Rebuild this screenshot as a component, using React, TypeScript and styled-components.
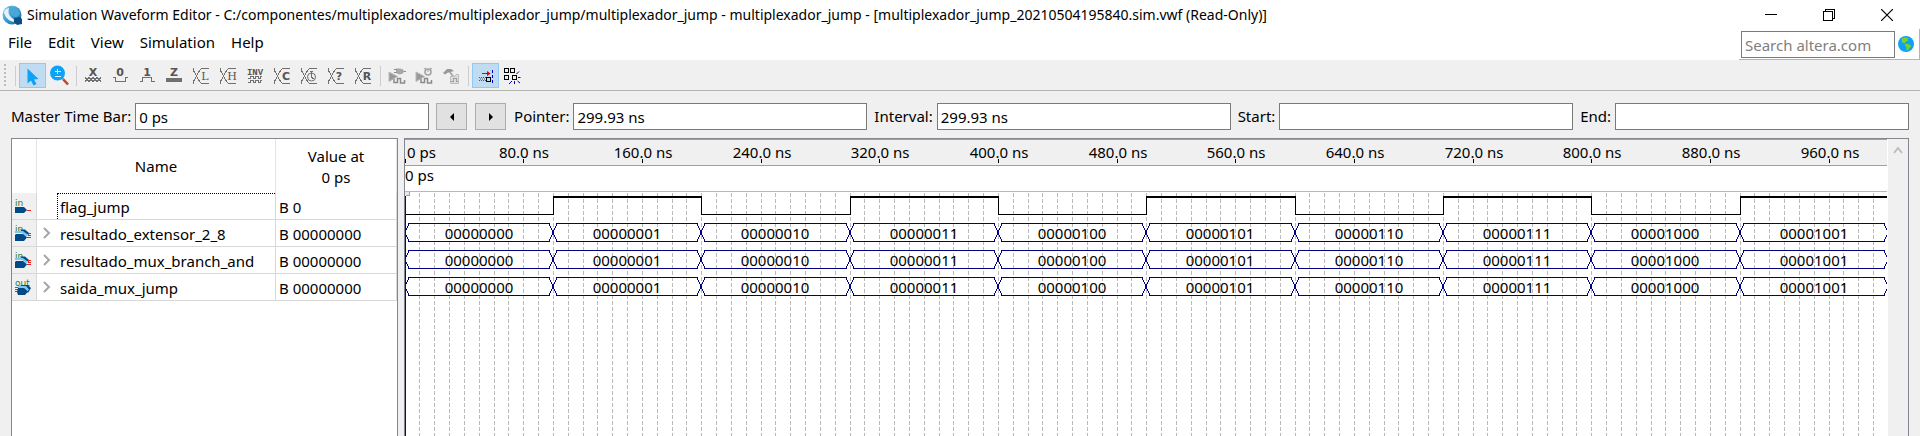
import React, { useLayoutEffect, useRef, useState } from "react";
import styled, { createGlobalStyle } from "styled-components";

const GlobalStyle = createGlobalStyle`
  *, *::before, *::after { box-sizing: border-box; }
  body { margin: 0; background: #f0f0f0; }
  body, button, input { font-family: "Noto Sans", "Open Sans", sans-serif; font-size: 15px; color: #000; }
`;

const Window = styled.div`
  display: flex;
  flex-direction: column;
  min-height: 100vh;
  line-height: 21px;
  overflow: hidden;
`;

const TitleBar = styled.header`
  display: flex;
  align-items: center;
  height: 29px;
  padding: 0 4px 0 2px;
  background: #fff;
`;

const Title = styled.h1`
  flex: 1;
  min-width: 0;
  margin: 0 0 0 5px;
  font-size: 14px;
  font-weight: 400;
  white-space: nowrap;
  overflow: hidden;
  text-overflow: ellipsis;
`;

const WindowButton = styled.button`
  display: flex;
  align-items: center;
  justify-content: center;
  width: 58px;
  height: 28px;
  padding: 0;
  border: 0;
  background: transparent;
`;

const MenuRow = styled.div`
  display: flex;
  justify-content: space-between;
  height: 33px;
  background: #fff;
  border-bottom: 2px solid #f0f0f0;
`;

const MenuBar = styled.nav`
  display: flex;
  align-items: flex-start;
  padding-top: 3px;
`;

const MenuItem = styled.button`
  padding: 0 8px;
  border: 0;
  background: transparent;
  line-height: 21px;
`;

const SearchBox = styled.form`
  display: flex;
  align-items: center;
  gap: 3px;
  height: 31px;
  padding: 0 5px 0 2px;
  border-right: 1px solid #b4b4b4;
  border-bottom: 1px solid #b4b4b4;
`;

const Field = styled.input`
  height: 27px;
  min-width: 0;
  padding: 1px 3px 0;
  border: 1px solid #7a7a7a;
  border-radius: 0;
  background: #fff;
  outline: none;
  &::placeholder { color: #808080; opacity: 1; }
`;

const SearchField = styled(Field)`
  width: 154px;
`;

const IconButton = styled.button`
  display: flex;
  padding: 0;
  border: 0;
  background: transparent;
`;

const ToolBar = styled.div`
  display: flex;
  align-items: center;
  height: 29px;
  padding: 0 4px 1px;
  border-bottom: 1px solid #b4b4b4;
`;

const Grip = styled.span`
  width: 2px;
  height: 23px;
  margin-right: 9px;
  background: repeating-linear-gradient(#bdbdbd 0 2px, transparent 2px 4px);
`;

const Separator = styled.span`
  width: 1px;
  height: 20px;
  margin-right: 3px;
  background: #cdcdcd;
  button + & { margin-left: 3px; }
`;

const Tool = styled.button<{ $active?: boolean }>`
  display: flex;
  align-items: center;
  justify-content: center;
  width: 27px;
  height: 25px;
  padding: 0;
  border: 1px solid ${(p) => (p.$active ? "#90c8f6" : "transparent")};
  background: ${(p) => (p.$active ? "#c0dcf3" : "transparent")};
`;

const ToolSvg = styled.svg`
  flex: none;
  width: 27px;
  height: 25px;
  overflow: visible;
`;

const TimeRow = styled.div`
  display: flex;
  align-items: flex-start;
  height: 47px;
  padding: 12px 11px 0;
`;

const FieldLabel = styled.label`
  display: flex;
  flex: 1 1 auto;
  align-items: center;
  gap: 4px;
  margin-right: 7px;
  line-height: 23px;
  white-space: nowrap;
  &:last-child { margin-right: 0; }
  ${Field} { flex: 1 1 0; width: 0; }
`;

const StepButton = styled.button`
  display: flex;
  align-items: center;
  justify-content: center;
  width: 31px;
  height: 27px;
  margin-right: 8px;
  padding: 0;
  border: 1px solid #adadad;
  background: #e1e1e1;
`;

const Panels = styled.main`
  flex: 1;
  display: grid;
  grid-template-columns: 387px 1fr;
  gap: 6px;
  padding: 0 11px;
`;

const Panel = styled.section`
  display: flex;
  min-width: 0;
  border: 1px solid #828790;
  border-bottom: 0;
  background: #fff;
`;

const SignalTable = styled.table`
  align-self: flex-start;
  width: 100%;
  table-layout: fixed;
  border-collapse: separate;
  border-spacing: 0;
`;

const HeadCell = styled.th<{ $width?: number }>`
  width: ${(p) => (p.$width ? `${p.$width}px` : "auto")};
  height: 54px;
  padding: 1px 0 0;
  border-right: 1px solid #e5e5e5;
  font-weight: 400;
`;

const Cell = styled.td<{ $kind?: "icon" | "name" }>`
  height: 27px;
  padding: ${(p) => (p.$kind ? "0" : "3px 0 0 3px")};
  border-right: 1px solid #d8d8d8;
  border-bottom: 1px solid #d8d8d8;
  background: ${(p) => (p.$kind === "icon" ? "#f0f0f0" : "#fff")};
`;

const NameBox = styled.div`
  display: grid;
  grid-template-columns: 20px 1fr;
  height: 26px;
`;

const Expander = styled.button`
  display: flex;
  align-items: center;
  justify-content: center;
  padding: 0;
  border: 0;
  background: transparent;
`;

const SignalName = styled.span<{ $focused: boolean }>`
  grid-column: 2;
  padding: ${(p) => (p.$focused ? "3px 0 0 2px" : "4px 0 0 3px")};
  border-style: dotted;
  border-color: #000;
  border-width: ${(p) => (p.$focused ? "1px 0 0 1px" : "0")};
`;

const WaveColumn = styled.div`
  display: flex;
  flex: 1;
  flex-direction: column;
  min-width: 0;
`;

const Ruler = styled.svg`
  display: block;
  width: 100%;
  height: 27px;
  border-top: 1px solid #a0a0a0;
  border-bottom: 1px solid #a0a0a0;
  background: #f0f0f0;
`;

const TimeBarStrip = styled.div`
  height: 26px;
  line-height: 19px;
  border-bottom: 1px solid #b8b8b8;
`;

const Plot = styled.svg`
  display: block;
  flex: 1;
  width: 100%;
  min-height: 120px;
  overflow: hidden;
`;

const ScrollBar = styled.div`
  width: 21px;
  padding-top: 5px;
  border-left: 1px solid #fff;
  background: #f0f0f0;
  ${IconButton} { margin: 0 auto; }
`;

/* ---------- toolbar drawings ---------- */

const GREY = "#707070";

type GlyphProps = { x?: number; y?: number; size?: number; serif?: boolean; children: string };
const Glyph = ({ x = 13, y = 13, size = 11, serif, children }: GlyphProps) => (
  <text
    x={x}
    y={y}
    fill="#555"
    fontFamily={serif ? "'DejaVu Serif', serif" : "'DejaVu Sans', sans-serif"}
    fontWeight={serif ? 400 : 700}
    fontSize={size}
    textAnchor="middle"
  >
    {children}
  </text>
);

const Line = ({ d, color = GREY, width = 1 }: { d: string; color?: string; width?: number }) => (
  <path d={d} fill="none" stroke={color} strokeWidth={width} shapeRendering="crispEdges" />
);

const BusCross = () => (
  <Line d="M5.5 5V7.500L11.500 18.500L13.500 20.500H21M5.500 21V18.500L11.500 7.500L13.500 5.500H21" />
);

const PlayMark = () => <path d="M5 9V18.500L13.500 13.500Z" fill="#999" stroke="#b8b8b8" />;

const PULSE = "M10 16V19.500H13.500V15.500H16.500V20H20.500V17";

const icons: Record<string, React.ReactNode> = {
  select: <path d="M8.500 5.500V20.500L12 17.500L14.500 22.500L17.500 21L15 16.500L19.500 16Z" fill="#0da2f5" />,
  zoom: (
    <>
      <path d="M16 15L22 21.500" stroke="#c14220" strokeWidth="2.500" />
      <path d="M15 14L17.500 16.500" stroke="#8fa3b0" strokeWidth="2" />
      <circle cx="11.500" cy="10" r="7.500" fill="#0da2f5" />
      <Line d="M9 8.500H15M11.500 6V11M9 13.500H15" color="#d9f1ff" />
    </>
  ),
  unknown: (
    <>
      <Glyph>X</Glyph>
      <Line d="M5 14.500L9 18.500L13 14.500L17 18.500L21 14.500M5 18.500L9 14.500L13 18.500L17 14.500L21 18.500" />
    </>
  ),
  low: (<><Glyph>0</Glyph><Line d="M6 14.500H8.500V18.500H18.500V14.500H21" /></>),
  high: (<><Glyph>1</Glyph><Line d="M6 18.500H8.500V14.500H17.500V18.500H21" /></>),
  highZ: (<><Glyph>Z</Glyph><rect x="5" y="15" width="16" height="4" fill={GREY} /></>),
  weakLow: (<><BusCross /><Glyph serif x={17} y={17}>L</Glyph></>),
  weakHigh: (<><BusCross /><Glyph serif x={17} y={17}>H</Glyph></>),
  invert: (
    <>
      <text x="13" y="12" fill="#555" fontFamily="'Liberation Mono', monospace" fontWeight="700" fontSize="9" textAnchor="middle">INV</text>
      <Line d="M6 15.500H8V13.500H11V15.500H13V13.500H16V15.500H18V13.500H20M6 19.500H8V17.500H11V19.500H13V17.500H16V19.500H18V17.500H20" />
    </>
  ),
  count: (<><BusCross /><Glyph x={17} y={17}>C</Glyph></>),
  clock: (
    <>
      <BusCross />
      <circle cx="15.500" cy="14" r="4" fill="#f0f0f0" stroke={GREY} />
      <Line d="M14 8.500H17M15.500 9V14L17.500 16" />
    </>
  ),
  arbitrary: (<><BusCross /><Glyph x={16} y={17}>?</Glyph></>),
  random: (<><BusCross /><Glyph x={17} y={17}>R</Glyph></>),
  functional: (
    <>
      <PlayMark />
      <path d="M12 5.500H16Q20 6 20 8.500Q19 11.500 15 11.500L12 10Z" fill="#a8a8a8" />
      <Line d="M10 6.500H13M10 9.500H13M20 8.500H22" color="#8c8c8c" />
      <path d={PULSE} fill="none" stroke="#8a8a8a" strokeWidth="1.500" />
    </>
  ),
  timing: (
    <>
      <PlayMark />
      <circle cx="17" cy="9" r="3" fill="#eee" stroke="#a0a0a0" strokeWidth="1.500" />
      <path d="M13 6L15 5M19 5L21 6M17 7V9" stroke="#a0a0a0" />
      <path d={PULSE} fill="none" stroke="#8a8a8a" strokeWidth="1.500" />
    </>
  ),
  generate: (
    <>
      <path d="M11 8L19 18" stroke="#a8a8a8" strokeWidth="2" />
      <path d="M5 10L9 6H13L16 8L12.500 9L10 9.500L7 11.500Z" fill="#999" />
      <path d="M12.500 13.500H17L18 11.500H20.500V20.500H12.500Z" fill="#dcdcdc" stroke="#bcbcbc" />
      <Line d="M13 18.500H15.500V15.500H18.500V18.500H20" color="#a0a0a0" />
    </>
  ),
  snap: (
    <>
      <Line d="M10 10.500H16" color="#e00000" />
      <path d="M15 8L18.500 10.500L15 13Z" fill="#e00000" />
      <path d="M7 14.500H15M7 17.500H15M8 16H14" stroke="#555" strokeDasharray="1 1" />
      <Line d="M14.500 14.500H18.500V18.500H14.500Z" color="#000" />
      <path d="M20.500 7V21" stroke="#0000d0" strokeDasharray="3 2" />
    </>
  ),
  grid: (
    <>
      <Line d="M5.500 5.500H9.500V9.500H5.500ZM11.500 5.500H15.500V9.500H11.500ZM5.500 12.500H9.500V16.500H5.500ZM13.500 12.500H17.500V16.500H13.500Z" color="#000" />
      <path d="M17.500 11L20 8.500M19 14.500H21.500M18.500 18L21 20M15.500 18V21M13 18L10 21" stroke="#0000d0" />
    </>
  ),
};

type ToolDef = { icon: string; label: string; active?: boolean };
const toolGroups: ToolDef[][] = [
  [
    { icon: "select", label: "Selection Tool", active: true },
    { icon: "zoom", label: "Zoom Tool" },
  ],
  [
    { icon: "unknown", label: "Forcing Unknown (X)" },
    { icon: "low", label: "Forcing Low (0)" },
    { icon: "high", label: "Forcing High (1)" },
    { icon: "highZ", label: "High Impedance (Z)" },
    { icon: "weakLow", label: "Weak Low (L)" },
    { icon: "weakHigh", label: "Weak High (H)" },
    { icon: "invert", label: "Invert" },
    { icon: "count", label: "Count Value" },
    { icon: "clock", label: "Overwrite Clock" },
    { icon: "arbitrary", label: "Arbitrary Value" },
    { icon: "random", label: "Random Values" },
  ],
  [
    { icon: "functional", label: "Run Functional Simulation" },
    { icon: "timing", label: "Run Timing Simulation" },
    { icon: "generate", label: "Generate Testbench" },
  ],
  [
    { icon: "snap", label: "Snap to Transition", active: true },
    { icon: "grid", label: "Snap to Grid" },
  ],
];

/* ---------- signals ---------- */

type Signal = { name: string; value: string; port: "in" | "out"; bus: boolean };
const signals: Signal[] = [
  { name: "flag_jump", value: "B 0", port: "in", bus: false },
  { name: "resultado_extensor_2_8", value: "B 00000000", port: "in", bus: true },
  { name: "resultado_mux_branch_and", value: "B 00000000", port: "in", bus: true },
  { name: "saida_mux_jump", value: "B 00000000", port: "out", bus: true },
];

const PortSvg = styled.svg`
  display: block;
  width: 24px;
  height: 26px;
`;

const PortIcon = ({ port, bus }: { port: "in" | "out"; bus: boolean }) => (
  <PortSvg viewBox="0 0 24 26">
    <text x="3" y={bus ? 12 : 13} fill="#1f7a1f" fontFamily="'DejaVu Sans', sans-serif" fontSize="9">{port}</text>
    {!bus && (
      <>
        <path d="M3 14H12L15 17L12 20H3Z" fill="#004b85" />
        <Line d="M15 17.500H19" color="#f02020" />
      </>
    )}
    {bus && port === "in" && (
      <>
        <path d="M8 9.500H13L17 13V15L10 12Z" fill="#004b85" />
        <path d="M3 11H11L16 15L14 17L10 13H3Z" fill="#7cc8f4" />
        <path d="M4 14H11L15 17.500L12 21H3V15Z" fill="#004b85" />
        <Line d="M16 13.500H19M16 15.500H19M15 17.500H19" color="#f02020" />
      </>
    )}
    {bus && port === "out" && (
      <>
        <Line d="M3 13.500H6M3 15.500H6M3 17.500H6" color="#f02020" />
        <path d="M8 11H16L19 14L16 19L12 14Z" fill="#004b85" />
        <path d="M6 12H14L17 15.500L15 18L12 14H6Z" fill="#7cc8f4" />
        <path d="M6 14H12L16 17.500L13 21H6L5 18Z" fill="#004b85" />
      </>
    )}
  </PortSvg>
);

/* ---------- waveforms ---------- */

const VISIBLE_NS = 999;
const STEP_NS = 100;
const ROW_HEIGHT = 27;
const ruler = Array.from({ length: 13 }, (_, i) => i * 80);
const gridTimes = Array.from({ length: 99 }, (_, i) => (i + 1) * 10);
const busValues = Array.from({ length: 10 }, (_, i) => i.toString(2).padStart(8, "0"));

function useWidth<T extends Element>() {
  const ref = useRef<T>(null);
  const [width, setWidth] = useState(0);
  useLayoutEffect(() => {
    const el = ref.current;
    if (!el) return;
    const update = () => setWidth(el.getBoundingClientRect().width);
    update();
    const observer = new ResizeObserver(update);
    observer.observe(el);
    return () => observer.disconnect();
  }, []);
  return [ref, width] as const;
}

const BitWave = ({ at }: { at: (ns: number) => number }) => (
  <g shapeRendering="crispEdges" stroke="#000" fill="none">
    {busValues.map((_, i) => {
      const x0 = at(i * STEP_NS);
      const x1 = at((i + 1) * STEP_NS);
      const high = i % 2 === 1;
      return (
        <g key={i}>
          <path d={`M${x0} ${high ? 5 : 22.5}H${x1}`} strokeWidth={high ? 2 : 1} />
          {i > 0 && <path d={`M${x0 + 0.5} 4V23`} />}
        </g>
      );
    })}
  </g>
);

const BusWave = ({ at, row }: { at: (ns: number) => number; row: number }) => {
  const top = 4.5 + row * ROW_HEIGHT;
  const mid = top + 9;
  const bottom = top + 18;
  return (
    <g>
      {busValues.map((value, i) => {
        const x0 = at(i * STEP_NS);
        const x1 = at((i + 1) * STEP_NS);
        return (
          <g key={value}>
            <path
              d={`M${x0} ${mid}L${x0 + 4} ${top}H${x1 - 4}L${x1} ${mid}L${x1 - 4} ${bottom}H${x0 + 4}Z`}
              fill="none"
              stroke="#000080"
              shapeRendering="crispEdges"
            />
            <text x={Math.floor((x0 + x1) / 2)} y={top + 15.5} textAnchor="middle" fontSize="15">
              {value}
            </text>
          </g>
        );
      })}
    </g>
  );
};

const Waveforms = () => {
  const [ref, width] = useWidth<HTMLDivElement>();
  const at = (ns: number) => Math.floor((ns * width) / VISIBLE_NS);
  return (
    <WaveColumn ref={ref}>
      <Ruler>
        {ruler.map((ns) => (
          <g key={ns}>
            <text x={ns ? at(ns) + 1 : 2} y="18" textAnchor={ns ? "middle" : "start"} fontSize="15">
              {ns ? `${ns}.0 ns` : "0 ps"}
            </text>
            <path d={`M${at(ns) + 0.5} 19V23`} stroke="#000" shapeRendering="crispEdges" />
          </g>
        ))}
      </Ruler>
      <TimeBarStrip>0 ps</TimeBarStrip>
      <Plot>
        <g stroke="#b9b9b9" strokeDasharray="4 2" shapeRendering="crispEdges">
          {gridTimes.map((ns) => (
            <line key={ns} x1={at(ns) + 0.5} x2={at(ns) + 0.5} y1="1" y2="100%" />
          ))}
        </g>
        <BitWave at={at} />
        {[1, 2, 3].map((row) => (
          <BusWave key={row} at={at} row={row} />
        ))}
        <path d="M0 0H5V4H0Z" fill="#e8e8e8" />
        <Line d="M4.500 0V3.500H1" color="#a0a0a0" />
        <line x1="0.500" x2="0.500" y1="4" y2="100%" stroke="#0000c0" shapeRendering="crispEdges" />
      </Plot>
    </WaveColumn>
  );
};

export default function App() {
  return (
    <Window>
      <GlobalStyle />
      <TitleBar>
        <svg width="20" height="20" viewBox="0 0 20 20" aria-hidden="true">
          <defs>
            <linearGradient id="sphere" x1="0" y1="0" x2="1" y2="1">
              <stop offset="0" stopColor="#8fd0ee" />
              <stop offset="0.500" stopColor="#3d9ccf" />
              <stop offset="1" stopColor="#0b5a96" />
            </linearGradient>
          </defs>
          <circle cx="10" cy="10" r="9.500" fill="url(#sphere)" />
          <path d="M2 8Q2 4 7 3Q5 9 10 13Q13 15 14 17Q5 17 2 8Z" fill="#e3f4fb" />
          <path d="M7 2Q15 1 18 8Q17 12 13 12Q7 10 7 2Z" fill="#4aa6d6" />
          <path d="M12 13L18 12L20 14V19L15 20L12 17Z" fill="#0a4f88" />
        </svg>
        <Title>
          Simulation Waveform Editor - C:/componentes/multiplexadores/multiplexador_jump/multiplexador_jump -
          multiplexador_jump - [multiplexador_jump_20210504195840.sim.vwf (Read-Only)]
        </Title>
        <WindowButton aria-label="Minimize">
          <svg width="12" height="12"><Line d="M0 5.500H12" color="#000" /></svg>
        </WindowButton>
        <WindowButton aria-label="Restore">
          <svg width="12" height="12"><Line d="M0.500 2.500H9.500V11.500H0.500ZM2.500 2V0.500H11.500V9.500H10" color="#000" /></svg>
        </WindowButton>
        <WindowButton aria-label="Close">
          <svg width="12" height="12"><path d="M0 0L12 12M12 0L0 12" stroke="#000" strokeWidth="1.200" /></svg>
        </WindowButton>
      </TitleBar>

      <MenuRow>
        <MenuBar>
          {["File", "Edit", "View", "Simulation", "Help"].map((item) => (
            <MenuItem key={item}>{item}</MenuItem>
          ))}
        </MenuBar>
        <SearchBox onSubmit={(e) => e.preventDefault()}>
          <SearchField aria-label="Search altera.com" placeholder="Search altera.com" />
          <IconButton aria-label="Search">
            <svg width="16" height="16" viewBox="0 0 17 17">
              <circle cx="8.500" cy="8.500" r="8.500" fill="#0da2f5" />
              <path d="M4 3Q7 1 11 2L10 4L11 5L8 6L7 8L4 6.500Z" fill="#7fd02c" />
              <path d="M8 8L12 9L14 10.500L12 13L10.500 15.500L9 15V12L7.500 10Z" fill="#7fd02c" />
            </svg>
          </IconButton>
        </SearchBox>
      </MenuRow>

      <ToolBar role="toolbar" aria-label="Waveform tools">
        <Grip />
        {toolGroups.map((group, g) => (
          <React.Fragment key={g}>
            <Separator />
            {group.map((tool) => (
              <Tool key={tool.icon} $active={tool.active} aria-label={tool.label} title={tool.label}>
                <ToolSvg viewBox="0 0 27 25">{icons[tool.icon]}</ToolSvg>
              </Tool>
            ))}
          </React.Fragment>
        ))}
      </ToolBar>

      <TimeRow>
        <FieldLabel>
          Master Time Bar:
          <Field defaultValue="0 ps" />
        </FieldLabel>
        <StepButton aria-label="Previous transition">
          <svg width="4" height="8"><path d="M4 0V8L0 4Z" /></svg>
        </StepButton>
        <StepButton aria-label="Next transition">
          <svg width="4" height="8"><path d="M0 0V8L4 4Z" /></svg>
        </StepButton>
        <FieldLabel>
          Pointer:
          <Field defaultValue="299.93 ns" />
        </FieldLabel>
        <FieldLabel>
          Interval:
          <Field defaultValue="299.93 ns" />
        </FieldLabel>
        <FieldLabel>
          Start:
          <Field />
        </FieldLabel>
        <FieldLabel>
          End:
          <Field />
        </FieldLabel>
      </TimeRow>

      <Panels>
        <Panel>
          <SignalTable>
            <thead>
              <tr>
                <HeadCell $width={25} aria-label="Port" />
                <HeadCell>Name</HeadCell>
                <HeadCell $width={121}>
                  Value at
                  <br />0 ps
                </HeadCell>
              </tr>
            </thead>
            <tbody>
              {signals.map((signal, i) => (
                <tr key={signal.name}>
                  <Cell $kind="icon">
                    <PortIcon port={signal.port} bus={signal.bus} />
                  </Cell>
                  <Cell $kind="name">
                    <NameBox>
                      {signal.bus && (
                        <Expander aria-label={`Expand ${signal.name}`}>
                          <svg width="8" height="12">
                            <path d="M1 1L6 6L1 11" fill="none" stroke="#a6a6a6" strokeWidth="2" />
                          </svg>
                        </Expander>
                      )}
                      <SignalName $focused={i === 0}>{signal.name}</SignalName>
                    </NameBox>
                  </Cell>
                  <Cell>{signal.value}</Cell>
                </tr>
              ))}
            </tbody>
          </SignalTable>
        </Panel>
        <Panel>
          <Waveforms />
          <ScrollBar>
            <IconButton aria-label="Scroll up">
              <svg width="10" height="12">
                <path d="M1 9L5 4L9 9" fill="none" stroke="#bdbdbd" strokeWidth="2" />
              </svg>
            </IconButton>
          </ScrollBar>
        </Panel>
      </Panels>
    </Window>
  );
}
